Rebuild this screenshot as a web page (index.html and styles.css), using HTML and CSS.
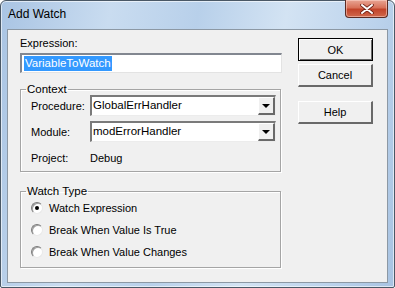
FILE: index.html
```html
<!DOCTYPE html>
<html lang="en">
<head>
    <meta charset="UTF-8">
    <title>Add Watch</title>
    <link rel="stylesheet" href="styles.css">
</head>
<body>

    <div class="window">
        <div class="titlebar">
            <span class="title">Add Watch</span>
            <div class="close-btn">
                <svg width="14" height="10" viewBox="0 0 14 10">
                    <path d="M2 1 L12 9 M12 1 L2 9" stroke="#6a1f14" stroke-width="3.6" stroke-linecap="round"/>
                    <path d="M2 1 L12 9 M12 1 L2 9" stroke="#fff" stroke-width="2" stroke-linecap="round"/>
                </svg>
            </div>
        </div>

        <div class="client">
            <div class="left-col">
                <div class="field-label">Expression:</div>
                <div class="textbox"><span class="selected">VariableToWatch</span></div>

                <fieldset class="group context">
                    <legend>Context</legend>
                    <div class="row">
                        <span class="row-label">Procedure:</span>
                        <div class="combo">
                            <span class="combo-text">GlobalErrHandler</span>
                            <span class="combo-btn"><i class="arrow"></i></span>
                        </div>
                    </div>
                    <div class="row">
                        <span class="row-label">Module:</span>
                        <div class="combo">
                            <span class="combo-text">modErrorHandler</span>
                            <span class="combo-btn"><i class="arrow"></i></span>
                        </div>
                    </div>
                    <div class="row">
                        <span class="row-label">Project:</span>
                        <span class="row-value">Debug</span>
                    </div>
                </fieldset>

                <fieldset class="group watch-type">
                    <legend>Watch Type</legend>
                    <div class="radio-row">
                        <span class="radio checked"></span>
                        <span>Watch Expression</span>
                    </div>
                    <div class="radio-row">
                        <span class="radio"></span>
                        <span>Break When Value Is True</span>
                    </div>
                    <div class="radio-row">
                        <span class="radio"></span>
                        <span>Break When Value Changes</span>
                    </div>
                </fieldset>
            </div>

            <div class="right-col">
                <div class="btn default">OK</div>
                <div class="btn">Cancel</div>
                <div class="btn help">Help</div>
            </div>
        </div>
    </div>

</body>
</html>
```

FILE: styles.css
```css
* {
    margin: 0;
    padding: 0;
    box-sizing: border-box;
}

body {
    width: 395px;
    height: 288px;
    overflow: hidden;
    font-family: "Liberation Sans", Arial, sans-serif;
    font-size: 11px;
    color: #000;
    background: #fff;
}

.window {
    width: 395px;
    height: 288px;
    border: 1px solid #4a5866;
    border-radius: 6px 6px 2px 2px;
    background: linear-gradient(100deg, #a9c4e3 0%, #c9dcf0 25%, #b8d0ea 45%, #d3e3f3 65%, #bcd3ec 85%, #a8c3e2 100%);
    padding: 0 6px 4px 6px;
    box-shadow: inset 0 0 0 1px rgba(255, 255, 255, 0.6);
}

.titlebar {
    height: 28px;
    display: flex;
    align-items: flex-start;
}

.title {
    font-size: 12px;
    line-height: 14px;
    margin-top: 6px;
    margin-left: 1px;
    color: #000;
}

.close-btn {
    margin-left: auto;
    width: 43px;
    height: 18px;
    margin-top: -1px;
    border: 1px solid #5b2a22;
    border-top: none;
    border-radius: 0 0 4px 4px;
    background: linear-gradient(to bottom, #e8a594 0%, #d8725a 45%, #c2442a 55%, #d0684c 100%);
    display: flex;
    align-items: center;
    justify-content: center;
    box-shadow: inset 0 0 0 1px rgba(255, 220, 210, 0.5);
}

.client {
    height: 254px;
    border: 1px solid #8c98a4;
    background: #f0f0f0;
    display: flex;
    padding: 0 0 0 12px;
    gap: 16px;
}

.left-col {
    width: 262px;
    padding-top: 6px;
}

.field-label {
    line-height: 14px;
}

.textbox {
    margin-top: 3px;
    height: 20px;
    background: #fff;
    border-style: solid;
    border-width: 2px 1px 1px 2px;
    border-color: #828790 #e3e3e3 #e3e3e3 #828790;
    padding: 1px 2px;
}

.selected {
    background: #3399ff;
    color: #fff;
    line-height: 15px;
    display: inline-block;
    padding: 0 1px;
    font-size: 11.5px;
}

.group {
    border: 1px solid #a5a5a5;
    box-shadow: 1px 1px 0 #fff, inset 1px 1px 0 #fff;
    margin-top: 10px;
    width: 261px;
}

.group legend {
    margin-left: -5px;
    padding: 0 1px;
    line-height: 12px;
    font-size: 11.5px;
}

.context {
    padding: 0 4px 3px 10px;
}

.row {
    height: 21px;
    display: flex;
    align-items: center;
    margin-bottom: 5px;
}

.row:last-child {
    margin-bottom: 0;
}

.row-label {
    width: 59px;
}

.combo {
    width: 186px;
    height: 21px;
    background: #fff;
    border-style: solid;
    border-width: 2px 1px 1px 2px;
    border-color: #7a7a7a #ececec #ececec #7a7a7a;
    display: flex;
    align-items: stretch;
}

.combo-text {
    flex: 1;
    padding-left: 1px;
    line-height: 17px;
    font-size: 11.5px;
}

.combo-btn {
    width: 17px;
    background: #f0f0f0;
    border-style: solid;
    border-width: 1px 2px 2px 1px;
    border-color: #fff #696969 #696969 #fff;
    display: flex;
    align-items: center;
    justify-content: center;
}

.arrow {
    width: 0;
    height: 0;
    border-left: 4px solid transparent;
    border-right: 4px solid transparent;
    border-top: 4px solid #000;
}

.watch-type {
    margin-top: 13px;
    padding: 0 4px 4px 10px;
}

.radio-row {
    height: 22px;
    display: flex;
    align-items: center;
    gap: 6px;
}

.radio {
    width: 12px;
    height: 12px;
    border-radius: 50%;
    background: #fff;
    border-style: solid;
    border-width: 1px;
    border-color: #7a7a7a #e8e8e8 #e8e8e8 #7a7a7a;
    box-shadow: inset 1px 1px 0 #a0a0a0;
    display: flex;
    align-items: center;
    justify-content: center;
}

.radio.checked::after {
    content: "";
    width: 4px;
    height: 4px;
    border-radius: 50%;
    background: #000;
}

.right-col {
    width: 75px;
    padding-top: 8px;
    display: flex;
    flex-direction: column;
}

.btn {
    height: 23px;
    background: #f0f0f0;
    border-style: solid;
    border-width: 1px 2px 2px 1px;
    border-color: #fff #696969 #696969 #fff;
    display: flex;
    align-items: center;
    justify-content: center;
    margin-bottom: 3px;
}

.btn.default {
    border: 1px solid #000;
    box-shadow: inset 1px 1px 0 #fff, inset -1px -1px 0 #696969;
}

.btn.help {
    margin-top: 11px;
}
```
